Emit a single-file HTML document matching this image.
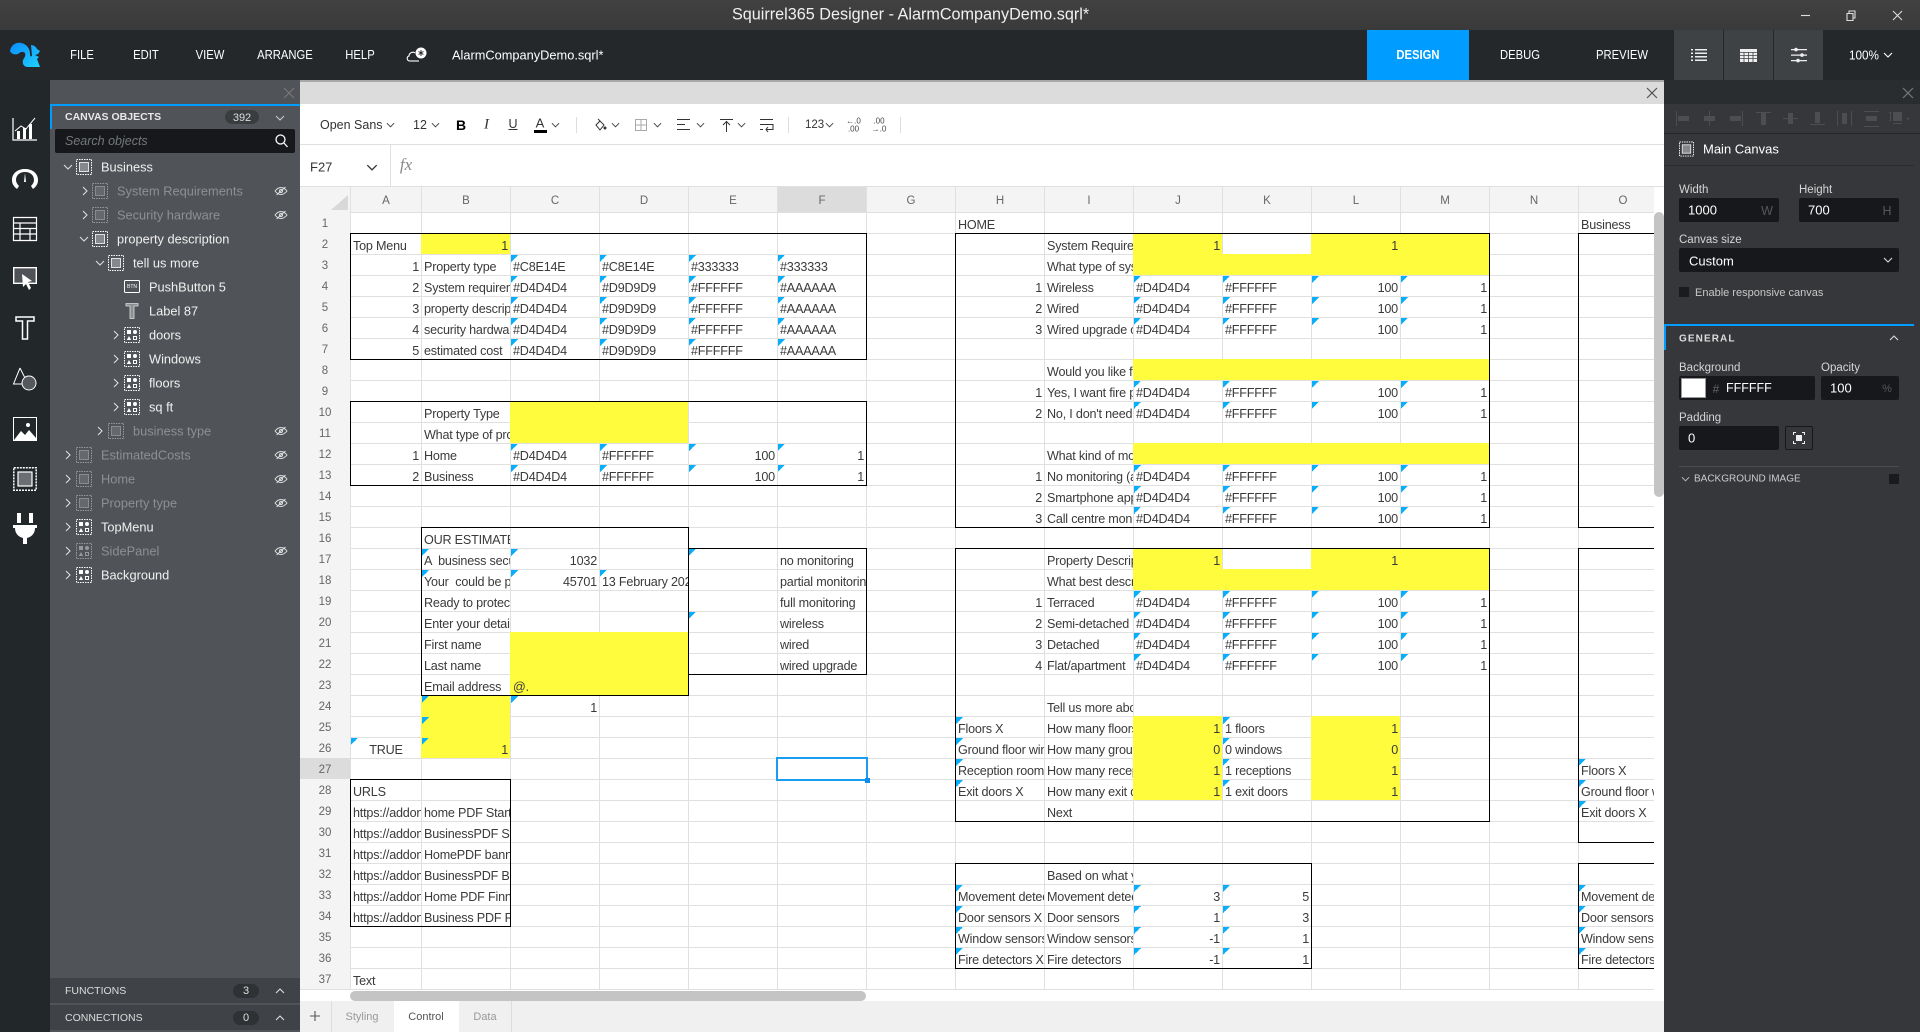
<!DOCTYPE html>
<html><head><meta charset="utf-8"><title>Squirrel365 Designer</title>
<style>
*{box-sizing:border-box}
html,body{margin:0;padding:0;width:1920px;height:1032px;overflow:hidden;background:#fff;font-family:"Liberation Sans",sans-serif}
.a{position:absolute}
.tx{position:absolute;white-space:nowrap;transform:translateY(-50%)}
.cx{position:absolute;white-space:nowrap;transform:translate(-50%,-50%)}
svg{position:absolute;overflow:visible}
#grid{position:absolute;left:300px;top:187px;width:1354px;height:803px;overflow:hidden;background-color:#fff;
background-image:linear-gradient(90deg,#e0e0e0 1px,transparent 1px),linear-gradient(#e0e0e0 1px,transparent 1px);
background-size:89px 100%,100% 21px;background-position:32px 0,0 25px}
table{border-collapse:separate;border-spacing:0;table-layout:fixed;width:1367px;position:absolute;left:0;top:0;font-size:12.6px;letter-spacing:-.2px;color:#3a3a3a}
tr{height:21px}
thead tr{height:25px}
th{font-weight:normal;font-size:11.5px;letter-spacing:0;color:#666;background:#f4f4f4;padding:2px 0 0;text-align:center;overflow:hidden}
thead th{border-left:1px solid #e0e0e0;border-bottom:0}
td{height:21px;padding:5px 2px 0 3px;line-height:16px;overflow:hidden;white-space:nowrap;vertical-align:top}
.r{text-align:right}
.m{text-align:center}
.y{background-color:#fffc3d}
.t{background-image:linear-gradient(135deg,#06aefc 50%,transparent 50%);background-size:7px 7px;background-repeat:no-repeat;background-position:1px 1px}
.b{position:absolute;border:1px solid #000;pointer-events:none}
.tree{position:absolute;font-size:12.8px;color:#f0f0f0;white-space:nowrap;transform:translateY(-50%)}
.dim{color:#8d9093}
.inp{position:absolute;background:#16181b;border-radius:2px}
.lbl{position:absolute;font-size:11.5px;color:#d5d5d5;white-space:nowrap;transform:translateY(-50%)}
.val{position:absolute;font-size:13px;color:#fff;white-space:nowrap;transform:translateY(-50%)}
.menu{position:absolute;font-size:12.5px;color:#fff;transform:translate(-50%,-50%) scaleX(.9);white-space:nowrap}
.tb{position:absolute;transform:translate(-50%,-50%);color:#333;font-size:12.5px;white-space:nowrap}
.sep{position:absolute;width:1px;top:117px;height:16px;background:#ddd}
</style></head>
<body>
<svg width="0" height="0" style="position:absolute">
<defs>
<symbol id="cv" viewBox="0 0 16 16"><rect x=".5" y=".5" width="15" height="15" fill="none" stroke="#fff" stroke-dasharray="1.5 1"/><rect x="3.5" y="3.5" width="9" height="9" fill="#85888c" stroke="#e0e0e0"/></symbol>
<symbol id="gr" viewBox="0 0 16 16"><rect x=".5" y=".5" width="15" height="15" fill="none" stroke="#fff" stroke-dasharray="1.5 1"/><rect x="3" y="3" width="4" height="4" fill="#fff"/><circle cx="11" cy="5" r="2" fill="#fff"/><path d="M5 9l2.2 4H2.800z" fill="#fff"/><rect x="9.500" y="9.500" width="3" height="3" fill="none" stroke="#fff"/></symbol>
<symbol id="eye" viewBox="0 0 14 10"><path d="M1 5C3 2.500 5 1.500 7 1.500s4 1 6 3.500c-2 2.500-4 3.500-6 3.500S3 7.500 1 5z" fill="none" stroke="#ddd" stroke-width="1"/><circle cx="7" cy="5" r="1.600" fill="none" stroke="#ddd"/><path d="M2.500 9L11.500 1" stroke="#ddd" stroke-width="1"/></symbol>
<symbol id="cd" viewBox="0 0 10 6"><path d="M1 1l4 4 4-4" fill="none" stroke="currentColor" stroke-width="1.100"/></symbol>
<symbol id="cr" viewBox="0 0 6 10"><path d="M1 1l4 4-4 4" fill="none" stroke="currentColor" stroke-width="1.100"/></symbol>
<symbol id="cu" viewBox="0 0 10 6"><path d="M1 5l4-4 4 4" fill="none" stroke="currentColor" stroke-width="1.100"/></symbol>
</defs></svg>

<!-- title bar -->
<div class="a" style="left:0;top:0;width:1920px;height:30px;background:linear-gradient(#414141,#3a3a3a)"></div>
<div class="tx" style="left:732px;top:15px;color:#f0f0f0;font-size:16.200px;">Squirrel365 Designer - AlarmCompanyDemo.sqrl*</div>
<svg style="left:1800px;top:10px" width="100" height="12" fill="none" stroke="#ddd" stroke-width="1.100"><path d="M1 5.500h9"/><path d="M47 3.500h6v7h-6zM49 3.500V1h6v7h-2"/><path d="M93 1l9 9M102 1l-9 9"/></svg>

<!-- menu bar -->
<div class="a" style="left:0;top:30px;width:1920px;height:50px;background:#24282b"></div>
<svg style="left:10px;top:42px" width="30" height="26" viewBox="0 0 30 26"><defs><linearGradient id="lg" x1="0" y1="0" x2="1" y2="1"><stop offset="0" stop-color="#0a8cff"/><stop offset="1" stop-color="#1fd0ff"/></linearGradient></defs><path d="M0 9C1 3 6 0 11 1c6 1 9 6 9 11 0 2 1 3 2 2L21 3c3 0 5 2 6 4l3 2-2 3-3 1 4 2-2 2 3 8H18c-4 0-6-3-5-7 1-2 3-4 2-7-2-2-5-1-7 1-3 1-7 0-8-3z" fill="url(#lg)"/></svg>
<div class="menu" style="left:82px;top:55px">FILE</div>
<div class="menu" style="left:146px;top:55px">EDIT</div>
<div class="menu" style="left:210px;top:55px">VIEW</div>
<div class="menu" style="left:285px;top:55px">ARRANGE</div>
<div class="menu" style="left:360px;top:55px">HELP</div>
<svg style="left:406px;top:47px" width="22" height="15" viewBox="0 0 22 15"><path d="M4 14C1 14 0 10 3 9c0-3 4-5 6-3" fill="none" stroke="#fff" stroke-width="1.100"/><path d="M4 14h9" stroke="#fff" stroke-width="1.100"/><circle cx="15" cy="6" r="5.500" fill="#fff"/><path d="M15 3v6M12.500 4.500l5 3M17.500 4.500l-5 3" stroke="#24282b" stroke-width="1"/></svg>
<div class="tx" style="left:452px;top:55px;color:#fff;font-size:12.800px">AlarmCompanyDemo.sqrl*</div>
<div class="a" style="left:1367px;top:30px;width:102px;height:50px;background:#009cff"></div>
<div class="menu" style="left:1418px;top:55px;font-weight:bold">DESIGN</div>
<div class="menu" style="left:1520px;top:55px">DEBUG</div>
<div class="menu" style="left:1622px;top:55px">PREVIEW</div>
<div class="a" style="left:1674px;top:30px;width:49px;height:50px;background:#3f4245"></div>
<div class="a" style="left:1724px;top:30px;width:49px;height:50px;background:#3f4245"></div>
<div class="a" style="left:1774px;top:30px;width:49px;height:50px;background:#3f4245"></div>
<svg style="left:1691px;top:49px" width="16" height="12" fill="#eee"><path d="M0 0h2v1.500H0zM4 0h12v1.500H4zM0 3.500h2V5H0zM4 3.500h12V5H4zM0 7h2v1.500H0zM4 7h12v1.500H4zM0 10.500h2V12H0zM4 10.500h12V12H4z"/></svg>
<svg style="left:1740px;top:49px" width="18" height="13"><rect width="17" height="13" fill="#eee"/><path d="M0 3.500h17M0 6.500h17M0 9.500h17M4 3v10M8.500 3v10M13 3v10" stroke="#3f4245" stroke-width=".8"/></svg>
<svg style="left:1791px;top:48px" width="16" height="14" fill="#eee"><path d="M0 1h16v1.200H0zM0 6.500h16v1.200H0zM0 12h16v1.200H0z"/><circle cx="5" cy="1.600" r="1.800"/><circle cx="11" cy="7.100" r="1.800"/><circle cx="7" cy="12.600" r="1.800"/></svg>
<div class="menu" style="left:1864px;top:55px;font-size:13px">100%</div>
<svg style="left:1883px;top:52px;color:#fff" width="10" height="6"><use href="#cd"/></svg>

<!-- left rail -->
<div class="a" style="left:0;top:80px;width:50px;height:952px;background:#22272a"></div>
<svg style="left:12px;top:116px" width="26" height="26" viewBox="0 0 26 26" fill="#fff"><path d="M1 2v22h24" fill="none" stroke="#fff" stroke-width="1.200"/><path d="M5 15h3v8H5zM11 12h3v11h-3zM17 8h3v15h-3z" fill="#fff"/><path d="M3 15l6-5 5 3 9-11" fill="none" stroke="#fff" stroke-width="1"/></svg>
<svg style="left:12px;top:168px" width="26" height="22" viewBox="0 0 26 22"><path d="M5 21C1 18 0 15 0 12 0 5 6 1 13 1s13 4 13 11c0 3-1 6-5 9l-2-3c2-2 3-4 3-6 0-5-4-8-9-8s-9 3-9 8c0 2 1 4 3 6z" fill="#fff"/><path d="M13 5l1 9h-2z" fill="#fff"/></svg>
<svg style="left:13px;top:217px" width="24" height="24" viewBox="0 0 24 24"><path d="M.5.500h23v23H.5zM.5 6h23M.5 11.500h23M.5 17h23M7 6v17.500M17 11.500V23.500" fill="none" stroke="#fff" stroke-width="1.200"/></svg>
<svg style="left:13px;top:267px" width="26" height="24" viewBox="0 0 26 24"><path d="M.7.700h22.600v15.600H.7z" fill="#4f5256" stroke="#fff" stroke-width="1.400"/><path d="M9 7l10 7-4 1 3 6-2 2-3-6-3 3z" fill="#fff"/></svg>
<svg style="left:15px;top:316px" width="20" height="24" viewBox="0 0 20 24"><path d="M1 1h18v4h-6.500v18h-5V5H1z" fill="none" stroke="#fff" stroke-width="1.500"/></svg>
<svg style="left:13px;top:367px" width="24" height="24" viewBox="0 0 24 24"><path d="M7 1L.5 17H12M7 1l4.500 9" fill="none" stroke="#fff" stroke-width="1"/><circle cx="16" cy="16" r="7" fill="#55585c" stroke="#fff" stroke-width="1"/></svg>
<svg style="left:13px;top:417px" width="24" height="24" viewBox="0 0 24 24"><rect x=".5" y=".5" width="23" height="23" fill="#22272a" stroke="#fff"/><path d="M1 23l7-9 4 4 4-5 7 8v2z" fill="#fff"/><circle cx="15" cy="8" r="2" fill="#fff"/></svg>
<svg style="left:13px;top:467px" width="24" height="24" viewBox="0 0 24 24"><rect x=".8" y=".8" width="22.400" height="22.400" fill="none" stroke="#fff" stroke-width="1.500" stroke-dasharray="2 1"/><rect x="5" y="5" width="14" height="14" fill="#6b6e72" stroke="#fff" stroke-width="1.200"/></svg>
<svg style="left:13px;top:513px" width="24" height="32" viewBox="0 0 24 32" fill="#fff"><path d="M4 0h4v10H4zM16 0h4v10h-4zM0 12h24v3h-2c0 6-4 9-8 10v6h-4v-6C6 24 2 21 2 15H0z"/></svg>

<!-- left panel -->
<div class="a" style="left:50px;top:80px;width:250px;height:952px;background:#505358"></div>
<svg style="left:284px;top:88px" width="10" height="10" stroke="#777" stroke-width="1.200"><path d="M0 0l10 10M10 0L0 10"/></svg>
<div class="a" style="left:50px;top:104px;width:250px;height:2px;background:#009cff"></div>
<div class="a" style="left:50px;top:104px;width:2px;height:25px;background:#009cff"></div>
<div class="tx" style="left:65px;top:117px;color:#e8e8e8;font-size:10.500px;font-weight:bold">CANVAS OBJECTS</div>
<div class="a" style="left:225px;top:110px;width:34px;height:14px;border-radius:7px;background:#3a3d40"></div>
<div class="cx" style="left:242px;top:117.500px;color:#ddd;font-size:11px">392</div>
<svg style="left:275px;top:115px;color:#ccc" width="10" height="6"><use href="#cd"/></svg>
<div class="inp" style="left:55px;top:129px;width:240px;height:24px"></div>
<div class="tx" style="left:65px;top:141px;color:#75787b;font-style:italic;font-size:12.500px">Search objects</div>
<svg style="left:275px;top:134px" width="13" height="14" fill="none" stroke="#fff" stroke-width="1.300"><circle cx="5.500" cy="5.500" r="4.500"/><path d="M9 9l3.500 4"/></svg>

<!-- tree -->
<svg style="left:63px;top:164px;color:#ddd" width="10" height="6"><use href="#cd"/></svg>
<svg style="left:76px;top:159px" width="16" height="16"><use href="#cv"/></svg>
<div class="tree" style="left:101px;top:167px">Business</div>

<svg style="left:82px;top:186px;color:#ddd" width="6" height="10"><use href="#cr"/></svg>
<svg style="left:92px;top:183px;opacity:.4" width="16" height="16"><use href="#cv"/></svg>
<div class="tree dim" style="left:117px;top:191px">System Requirements</div>
<svg style="left:274px;top:186px" width="14" height="10"><use href="#eye"/></svg>

<svg style="left:82px;top:210px;color:#ddd" width="6" height="10"><use href="#cr"/></svg>
<svg style="left:92px;top:207px;opacity:.4" width="16" height="16"><use href="#cv"/></svg>
<div class="tree dim" style="left:117px;top:215px">Security hardware</div>
<svg style="left:274px;top:210px" width="14" height="10"><use href="#eye"/></svg>

<svg style="left:79px;top:236px;color:#ddd" width="10" height="6"><use href="#cd"/></svg>
<svg style="left:92px;top:231px" width="16" height="16"><use href="#cv"/></svg>
<div class="tree" style="left:117px;top:239px">property description</div>

<svg style="left:95px;top:260px;color:#ddd" width="10" height="6"><use href="#cd"/></svg>
<svg style="left:108px;top:255px" width="16" height="16"><use href="#cv"/></svg>
<div class="tree" style="left:133px;top:263px">tell us more</div>

<svg style="left:124px;top:279px" width="16" height="16" viewBox="0 0 16 16"><rect x=".5" y="1.500" width="15" height="12" rx="1" fill="none" stroke="#fff"/></svg>
<div class="cx" style="left:132px;top:287px;font-size:5px;color:#fff">BTN</div>
<div class="tree" style="left:149px;top:287px">PushButton 5</div>

<svg style="left:125px;top:303px" width="14" height="16" viewBox="0 0 14 16"><path d="M1 .500h12v2.500H9v12.500H5V3H1z" fill="#8c8f92" stroke="#ddd" stroke-width=".8"/></svg>
<div class="tree" style="left:149px;top:311px">Label 87</div>

<svg style="left:113px;top:330px;color:#ddd" width="6" height="10"><use href="#cr"/></svg>
<svg style="left:124px;top:327px" width="16" height="16"><use href="#gr"/></svg>
<div class="tree" style="left:149px;top:335px">doors</div>
<svg style="left:113px;top:354px;color:#ddd" width="6" height="10"><use href="#cr"/></svg>
<svg style="left:124px;top:351px" width="16" height="16"><use href="#gr"/></svg>
<div class="tree" style="left:149px;top:359px">Windows</div>
<svg style="left:113px;top:378px;color:#ddd" width="6" height="10"><use href="#cr"/></svg>
<svg style="left:124px;top:375px" width="16" height="16"><use href="#gr"/></svg>
<div class="tree" style="left:149px;top:383px">floors</div>
<svg style="left:113px;top:402px;color:#ddd" width="6" height="10"><use href="#cr"/></svg>
<svg style="left:124px;top:399px" width="16" height="16"><use href="#gr"/></svg>
<div class="tree" style="left:149px;top:407px">sq ft</div>

<svg style="left:97px;top:426px;color:#ddd" width="6" height="10"><use href="#cr"/></svg>
<svg style="left:108px;top:423px;opacity:.4" width="16" height="16"><use href="#cv"/></svg>
<div class="tree dim" style="left:133px;top:431px">business type</div>
<svg style="left:274px;top:426px" width="14" height="10"><use href="#eye"/></svg>

<svg style="left:65px;top:450px;color:#ddd" width="6" height="10"><use href="#cr"/></svg>
<svg style="left:76px;top:447px;opacity:.4" width="16" height="16"><use href="#cv"/></svg>
<div class="tree dim" style="left:101px;top:455px">EstimatedCosts</div>
<svg style="left:274px;top:450px" width="14" height="10"><use href="#eye"/></svg>

<svg style="left:65px;top:474px;color:#ddd" width="6" height="10"><use href="#cr"/></svg>
<svg style="left:76px;top:471px;opacity:.4" width="16" height="16"><use href="#cv"/></svg>
<div class="tree dim" style="left:101px;top:479px">Home</div>
<svg style="left:274px;top:474px" width="14" height="10"><use href="#eye"/></svg>

<svg style="left:65px;top:498px;color:#ddd" width="6" height="10"><use href="#cr"/></svg>
<svg style="left:76px;top:495px;opacity:.4" width="16" height="16"><use href="#cv"/></svg>
<div class="tree dim" style="left:101px;top:503px">Property type</div>
<svg style="left:274px;top:498px" width="14" height="10"><use href="#eye"/></svg>

<svg style="left:65px;top:522px;color:#ddd" width="6" height="10"><use href="#cr"/></svg>
<svg style="left:76px;top:519px" width="16" height="16"><use href="#gr"/></svg>
<div class="tree" style="left:101px;top:527px">TopMenu</div>

<svg style="left:65px;top:546px;color:#ddd" width="6" height="10"><use href="#cr"/></svg>
<svg style="left:76px;top:543px;opacity:.4" width="16" height="16"><use href="#gr"/></svg>
<div class="tree dim" style="left:101px;top:551px">SidePanel</div>
<svg style="left:274px;top:546px" width="14" height="10"><use href="#eye"/></svg>

<svg style="left:65px;top:570px;color:#ddd" width="6" height="10"><use href="#cr"/></svg>
<svg style="left:76px;top:567px" width="16" height="16"><use href="#gr"/></svg>
<div class="tree" style="left:101px;top:575px">Background</div>

<!-- functions / connections -->
<div class="a" style="left:50px;top:978px;width:250px;height:25px;background:#3f4246"></div>
<div class="a" style="left:50px;top:1005px;width:250px;height:25px;background:#3f4246"></div>
<div class="tx" style="left:65px;top:991px;color:#ddd;font-size:10.500px">FUNCTIONS</div>
<div class="tx" style="left:65px;top:1018px;color:#ddd;font-size:10.500px">CONNECTIONS</div>
<div class="a" style="left:233px;top:984px;width:26px;height:14px;border-radius:7px;background:#2f3235"></div>
<div class="a" style="left:233px;top:1011px;width:26px;height:14px;border-radius:7px;background:#2f3235"></div>
<div class="cx" style="left:246px;top:991px;color:#ddd;font-size:11px">3</div>
<div class="cx" style="left:246px;top:1018px;color:#ddd;font-size:11px">0</div>
<svg style="left:275px;top:988px;color:#ddd" width="10" height="6"><use href="#cu"/></svg>
<svg style="left:275px;top:1015px;color:#ddd" width="10" height="6"><use href="#cu"/></svg>

<!-- main: strip + toolbar -->
<div class="a" style="left:300px;top:80px;width:1364px;height:2px;background:#a8a8a8"></div>
<div class="a" style="left:300px;top:82px;width:1364px;height:22px;background:#dcdcdc"></div>
<svg style="left:1647px;top:88px" width="10" height="10" stroke="#555" stroke-width="1.200"><path d="M0 0l10 10M10 0L0 10"/></svg>
<div class="a" style="left:300px;top:104px;width:1364px;height:41px;background:#fff;border-bottom:1px solid #e0e0e0"></div>
<div class="a" style="left:300px;top:145px;width:1364px;height:42px;background:#fff;border-bottom:1px solid #e0e0e0"></div>

<div class="tx" style="left:320px;top:125px;font-size:12.500px;color:#333">Open Sans</div>
<svg style="left:386px;top:122px;color:#444" width="9" height="6"><use href="#cd"/></svg>
<div class="tx" style="left:413px;top:125px;font-size:12.500px;color:#333">12</div>
<svg style="left:431px;top:122px;color:#444" width="9" height="6"><use href="#cd"/></svg>
<div class="tb" style="left:461px;top:125px;font-weight:bold;font-size:14px;color:#000">B</div>
<div class="tb" style="left:486.500px;top:125px;font-style:italic;font-family:'Liberation Serif',serif;font-size:15px">I</div>
<div class="tb" style="left:513px;top:124px;text-decoration:underline;font-size:12.500px">U</div>
<div class="tb" style="left:540px;top:123px;font-size:13px">A</div>
<div class="a" style="left:534px;top:130px;width:13px;height:3px;background:#000"></div>
<svg style="left:551px;top:122px;color:#444" width="9" height="6"><use href="#cd"/></svg>
<div class="sep" style="left:576px"></div>
<svg style="left:594px;top:118px" width="12" height="14" fill="none" stroke="#333"><path d="M2 7l4-4 4 4-4 5z"/><path d="M4 1l2 2" /><circle cx="11" cy="10" r="1" fill="#333"/></svg>
<svg style="left:611px;top:122px;color:#444" width="9" height="6"><use href="#cd"/></svg>
<svg style="left:635px;top:119px" width="12" height="12" fill="none" stroke="#aaa"><path d="M.5.500h11v11H.5zM6 .500v11M.5 6h11"/></svg>
<svg style="left:653px;top:122px;color:#444" width="9" height="6"><use href="#cd"/></svg>
<svg style="left:677px;top:119px" width="14" height="12" stroke="#333" stroke-width="1"><path d="M0 .500h13M0 5.500h8M0 10.500h13"/></svg>
<svg style="left:696px;top:122px;color:#444" width="9" height="6"><use href="#cd"/></svg>
<svg style="left:720px;top:119px" width="13" height="13" fill="none" stroke="#333"><path d="M0 .500h13M6.500 13V3M3 6l3.500-3.500L10 6"/></svg>
<svg style="left:737px;top:122px;color:#444" width="9" height="6"><use href="#cd"/></svg>
<svg style="left:760px;top:119px" width="14" height="13" fill="none" stroke="#333"><path d="M0 .500h13M0 5.500h13v5H6M8 8l-2 2.500L8 13M0 10.500h3"/></svg>
<div class="sep" style="left:788px"></div>
<div class="tx" style="left:805px;top:125px;font-size:11.500px;color:#333">123</div>
<svg style="left:825px;top:122px;color:#444" width="9" height="6"><use href="#cd"/></svg>
<div class="cx" style="left:853.500px;top:121px;font-size:8px;color:#444">←.0</div>
<div class="cx" style="left:853.500px;top:129px;font-size:8px;color:#444">.00</div>
<div class="cx" style="left:879px;top:121px;font-size:8px;color:#444">.00</div>
<div class="cx" style="left:879px;top:129px;font-size:8px;color:#444">→.0</div>
<div class="sep" style="left:900px"></div>

<div class="tx" style="left:310px;top:167px;font-size:13px;color:#333">F27</div>
<svg style="left:366px;top:164px;color:#333" width="12" height="7"><use href="#cd"/></svg>
<div class="a" style="left:390px;top:145px;width:1px;height:41px;background:#e0e0e0"></div>
<div class="cx" style="left:406px;top:165px;font-family:'Liberation Serif',serif;font-style:italic;font-size:17px;color:#888">fx</div>

<!-- grid -->
<div id="grid">
<table>
<colgroup><col style="width:50px"><col style="width:71px"><col span="14" style="width:89px"></colgroup>
<thead><tr><th style="border-left:0;position:relative"><svg style="left:31px;top:8px" width="17" height="15"><path d="M0 15L17 0v15z" fill="#d8d8d8"/></svg></th><th>A</th><th>B</th><th>C</th><th>D</th><th>E</th><th style="background:#dcdcdc">F</th><th>G</th><th>H</th><th>I</th><th>J</th><th>K</th><th>L</th><th>M</th><th>N</th><th>O</th></tr></thead>
<tbody>
<tr><th>1</th><td colspan="7"></td><td>HOME</td><td colspan="5"></td><td></td><td>Business</td></tr>
<tr><th>2</th><td>Top Menu</td><td class="y r">1</td><td colspan="5"></td><td></td><td>System Requirements</td><td class="y r">1</td><td></td><td class="y r">1</td><td class="y"></td></tr>
<tr><th>3</th><td class="r">1</td><td>Property type</td><td class="t">#C8E14E</td><td class="t">#C8E14E</td><td class="t">#333333</td><td class="t">#333333</td><td></td><td></td><td>What type of system</td><td class="y"></td><td class="y"></td><td class="y"></td><td class="y"></td></tr>
<tr><th>4</th><td class="r">2</td><td>System requirements</td><td class="t">#D4D4D4</td><td class="t">#D9D9D9</td><td class="t">#FFFFFF</td><td class="t">#AAAAAA</td><td></td><td class="r">1</td><td>Wireless</td><td class="t">#D4D4D4</td><td class="t">#FFFFFF</td><td class="t r">100</td><td class="t r">1</td></tr>
<tr><th>5</th><td class="r">3</td><td>property description</td><td class="t">#D4D4D4</td><td class="t">#D9D9D9</td><td class="t">#FFFFFF</td><td class="t">#AAAAAA</td><td></td><td class="r">2</td><td>Wired</td><td class="t">#D4D4D4</td><td class="t">#FFFFFF</td><td class="t r">100</td><td class="t r">1</td></tr>
<tr><th>6</th><td class="r">4</td><td>security hardware</td><td class="t">#D4D4D4</td><td class="t">#D9D9D9</td><td class="t">#FFFFFF</td><td class="t">#AAAAAA</td><td></td><td class="r">3</td><td>Wired upgrade option</td><td class="t">#D4D4D4</td><td class="t">#FFFFFF</td><td class="t r">100</td><td class="t r">1</td></tr>
<tr><th>7</th><td class="r">5</td><td>estimated cost</td><td class="t">#D4D4D4</td><td class="t">#D9D9D9</td><td class="t">#FFFFFF</td><td class="t">#AAAAAA</td></tr>
<tr><th>8</th><td colspan="8"></td><td>Would you like fire protection</td><td class="y"></td><td class="y"></td><td class="y"></td><td class="y"></td></tr>
<tr><th>9</th><td colspan="7"></td><td class="r">1</td><td>Yes, I want fire protection</td><td class="t">#D4D4D4</td><td class="t">#FFFFFF</td><td class="t r">100</td><td class="t r">1</td></tr>
<tr><th>10</th><td></td><td>Property Type</td><td class="y"></td><td class="y"></td><td colspan="3"></td><td class="r">2</td><td>No, I don't need</td><td class="t">#D4D4D4</td><td class="t">#FFFFFF</td><td class="t r">100</td><td class="t r">1</td></tr>
<tr><th>11</th><td></td><td>What type of property</td><td class="y"></td><td class="y"></td></tr>
<tr><th>12</th><td class="r">1</td><td>Home</td><td class="t">#D4D4D4</td><td class="t">#FFFFFF</td><td class="t r">100</td><td class="t r">1</td><td></td><td></td><td>What kind of monitoring</td><td class="y"></td><td class="y"></td><td class="y"></td><td class="y"></td></tr>
<tr><th>13</th><td class="r">2</td><td>Business</td><td class="t">#D4D4D4</td><td class="t">#FFFFFF</td><td class="t r">100</td><td class="t r">1</td><td></td><td class="r">1</td><td>No monitoring (a</td><td class="t">#D4D4D4</td><td class="t">#FFFFFF</td><td class="t r">100</td><td class="t r">1</td></tr>
<tr><th>14</th><td colspan="7"></td><td class="r">2</td><td>Smartphone app</td><td class="t">#D4D4D4</td><td class="t">#FFFFFF</td><td class="t r">100</td><td class="t r">1</td></tr>
<tr><th>15</th><td colspan="7"></td><td class="r">3</td><td>Call centre monitoring</td><td class="t">#D4D4D4</td><td class="t">#FFFFFF</td><td class="t r">100</td><td class="t r">1</td></tr>
<tr><th>16</th><td></td><td>OUR ESTIMATED</td></tr>
<tr><th>17</th><td></td><td class="t">A &nbsp;business security</td><td class="t r">1032</td><td></td><td class="t"></td><td>no monitoring</td><td></td><td></td><td>Property Description</td><td class="y r">1</td><td></td><td class="y r">1</td><td class="y"></td></tr>
<tr><th>18</th><td></td><td class="t">Your &nbsp;could be protected</td><td class="t r">45701</td><td class="t">13 February 2021</td><td></td><td>partial monitoring</td><td></td><td></td><td>What best describes</td><td class="y"></td><td class="y"></td><td class="y"></td><td class="y"></td></tr>
<tr><th>19</th><td></td><td>Ready to protect</td><td colspan="3"></td><td>full monitoring</td><td></td><td class="r">1</td><td>Terraced</td><td class="t">#D4D4D4</td><td class="t">#FFFFFF</td><td class="t r">100</td><td class="t r">1</td></tr>
<tr><th>20</th><td></td><td>Enter your details</td><td colspan="2"></td><td class="t"></td><td>wireless</td><td></td><td class="r">2</td><td>Semi-detached</td><td class="t">#D4D4D4</td><td class="t">#FFFFFF</td><td class="t r">100</td><td class="t r">1</td></tr>
<tr><th>21</th><td></td><td>First name</td><td class="y"></td><td class="y"></td><td></td><td>wired</td><td></td><td class="r">3</td><td>Detached</td><td class="t">#D4D4D4</td><td class="t">#FFFFFF</td><td class="t r">100</td><td class="t r">1</td></tr>
<tr><th>22</th><td></td><td>Last name</td><td class="y"></td><td class="y"></td><td></td><td>wired upgrade</td><td></td><td class="r">4</td><td>Flat/apartment</td><td class="t">#D4D4D4</td><td class="t">#FFFFFF</td><td class="t r">100</td><td class="t r">1</td></tr>
<tr><th>23</th><td></td><td>Email address</td><td class="y">@.</td><td class="y"></td></tr>
<tr><th>24</th><td></td><td class="y t"></td><td class="t r">1</td><td colspan="5"></td><td>Tell us more about</td></tr>
<tr><th>25</th><td></td><td class="y t"></td><td colspan="5"></td><td class="t">Floors X</td><td>How many floors</td><td class="y r">1</td><td class="t">1 floors</td><td class="y r">1</td></tr>
<tr><th>26</th><td class="t m">TRUE</td><td class="y t r">1</td><td colspan="5"></td><td class="t">Ground floor windows X</td><td>How many ground floor</td><td class="y r">0</td><td class="t">0 windows</td><td class="y r">0</td></tr>
<tr><th style="background:#dcdcdc">27</th><td colspan="7"></td><td class="t">Reception rooms X</td><td>How many reception rooms</td><td class="y r">1</td><td class="t">1 receptions</td><td class="y r">1</td><td colspan="2"></td><td class="t">Floors X</td></tr>
<tr><th>28</th><td>URLS</td><td colspan="6"></td><td class="t">Exit doors X</td><td>How many exit doors</td><td class="y r">1</td><td class="t">1 exit doors</td><td class="y r">1</td><td colspan="2"></td><td class="t">Ground floor windows</td></tr>
<tr><th>29</th><td>https://addons</td><td>home PDF Starter</td><td colspan="6"></td><td>Next</td><td colspan="5"></td><td class="t">Exit doors X</td></tr>
<tr><th>30</th><td>https://addons</td><td>BusinessPDF Starter</td></tr>
<tr><th>31</th><td>https://addons</td><td>HomePDF banner</td></tr>
<tr><th>32</th><td>https://addons</td><td>BusinessPDF Basic</td><td colspan="6"></td><td>Based on what you</td></tr>
<tr><th>33</th><td>https://addons</td><td>Home PDF Finn</td><td colspan="5"></td><td class="t">Movement detectors X</td><td>Movement detectors</td><td class="t r">3</td><td class="t r">5</td><td colspan="3"></td><td class="t">Movement detectors X</td></tr>
<tr><th>34</th><td>https://addons</td><td>Business PDF Finn</td><td colspan="5"></td><td class="t">Door sensors X</td><td>Door sensors</td><td class="t r">1</td><td class="t r">3</td><td colspan="3"></td><td class="t">Door sensors X</td></tr>
<tr><th>35</th><td colspan="7"></td><td class="t">Window sensors X</td><td>Window sensors</td><td class="t r">-1</td><td class="t r">1</td><td colspan="3"></td><td class="t">Window sensors X</td></tr>
<tr><th>36</th><td colspan="7"></td><td class="t">Fire detectors X</td><td>Fire detectors</td><td class="t r">-1</td><td class="t r">1</td><td colspan="3"></td><td class="t">Fire detectors X</td></tr>
<tr><th>37</th><td>Text</td></tr>
</tbody></table>
<div class="a" style="left:50px;top:25px;width:1px;height:778px;background:#e0e0e0"></div>
<div class="b" style="left:50px;top:46px;width:517px;height:127px"></div>
<div class="b" style="left:50px;top:214px;width:517px;height:85px"></div>
<div class="b" style="left:121px;top:340px;width:268px;height:169px"></div>
<div class="b" style="left:388px;top:361px;width:179px;height:127px"></div>
<div class="b" style="left:50px;top:592px;width:161px;height:148px"></div>
<div class="b" style="left:655px;top:46px;width:535px;height:295px"></div>
<div class="b" style="left:655px;top:361px;width:535px;height:274px"></div>
<div class="b" style="left:655px;top:676px;width:357px;height:106px"></div>
<div class="b" style="left:1278px;top:46px;width:200px;height:295px"></div>
<div class="b" style="left:1278px;top:361px;width:200px;height:295px"></div>
<div class="b" style="left:1278px;top:676px;width:200px;height:106px"></div>
<div class="a" style="left:476px;top:570px;width:92px;height:24px;border:2px solid #1a9cf0"></div>
<div class="a" style="left:565px;top:591px;width:5px;height:5px;background:#0a8ff0"></div>
</div>

<!-- scrollbars -->
<div class="a" style="left:1654px;top:187px;width:10px;height:814px;background:#fff"></div>
<div class="a" style="left:1654px;top:212px;width:10px;height:285px;background:#c4c4c4;border-radius:5px"></div>
<div class="a" style="left:300px;top:990px;width:1354px;height:11px;background:#fff"></div>
<div class="a" style="left:350px;top:991px;width:516px;height:10px;background:#c4c4c4;border-radius:5px"></div>

<!-- bottom tabs -->
<div class="a" style="left:300px;top:1001px;width:1364px;height:31px;background:#f0f0f0"></div>
<div class="a" style="left:331px;top:1001px;width:1px;height:31px;background:#ddd"></div>
<div class="a" style="left:394px;top:1001px;width:65px;height:31px;background:#fff"></div>
<div class="a" style="left:511px;top:1001px;width:1px;height:31px;background:#ddd"></div>
<svg style="left:310px;top:1011px" width="10" height="10" stroke="#555" stroke-width="1.100"><path d="M5 0v10M0 5h10"/></svg>
<div class="cx" style="left:362px;top:1017px;font-size:11px;color:#999">Styling</div>
<div class="cx" style="left:426px;top:1017px;font-size:11px;color:#555">Control</div>
<div class="cx" style="left:485px;top:1017px;font-size:11px;color:#999">Data</div>

<!-- right panel -->
<div class="a" style="left:1664px;top:80px;width:256px;height:952px;background:#36373a"></div>
<div class="a" style="left:1664px;top:80px;width:256px;height:24px;background:#2a2d30"></div>
<svg style="left:1903px;top:88px" width="10" height="10" stroke="#777" stroke-width="1.200"><path d="M0 0l10 10M10 0L0 10"/></svg>
<svg style="left:1664px;top:104px" width="256" height="30" viewBox="0 0 256 30" fill="#4c4e52">
<path d="M12 7h1v15h-1zM14 12h11v5H14z"/>
<path d="M45 7h1v15h-1zM40 12h11v5H40z"/>
<path d="M78 7h1v15h-1zM66 12h11v5H66z"/>
<path d="M92 8h15v1H92zM97 9h5v12h-5z"/>
<path d="M119 14h15v1h-15zM124 9h5v11h-5z"/>
<path d="M146 20h15v1h-15zM151 8h5v11h-5z"/>
<path d="M173 7h1v15h-1zM187 7h1v15h-1zM178 9h5v11h-5z"/>
<path d="M200 7h15v1h-15zM200 22h15v1h-15zM202 12h11v5h-11z"/>
<path d="M229 8h9v9h-9zM225 8h2v1h-2zM225 16h2v1h-2zM226 8h1v9h-1zM229 19h9v1h-9zM242 14h4l-2 2z"/></svg>
<div class="a" style="left:1664px;top:133px;width:256px;height:1px;background:#242628"></div>
<svg style="left:1679px;top:141px" width="15" height="16"><use href="#cv"/></svg>
<div class="val" style="left:1703px;top:149px;font-size:13px;color:#fff">Main Canvas</div>
<div class="a" style="left:1664px;top:165px;width:250px;height:1px;background:#2a2c2e"></div>

<div class="lbl" style="left:1679px;top:190px">Width</div>
<div class="lbl" style="left:1799px;top:190px">Height</div>
<div class="inp" style="left:1679px;top:198px;width:100px;height:24px"></div>
<div class="inp" style="left:1799px;top:198px;width:100px;height:24px"></div>
<div class="val" style="left:1688px;top:210px">1000</div>
<div class="val" style="left:1808px;top:210px">700</div>
<div class="cx" style="left:1767px;top:210.500px;font-size:12.500px;color:#55585c">W</div>
<div class="cx" style="left:1887px;top:210.500px;font-size:12.500px;color:#55585c">H</div>
<div class="lbl" style="left:1679px;top:240px">Canvas size</div>
<div class="inp" style="left:1679px;top:248px;width:220px;height:24px"></div>
<div class="val" style="left:1689px;top:261px">Custom</div>
<svg style="left:1883px;top:257px;color:#ddd" width="10" height="6"><use href="#cd"/></svg>
<div class="a" style="left:1679px;top:287px;width:10px;height:10px;background:#1a1b1e"></div>
<div class="lbl" style="left:1695px;top:292.500px;font-size:11px;color:#c8c8c8">Enable responsive canvas</div>

<div class="a" style="left:1664px;top:324px;width:250px;height:2px;background:#009cff"></div>
<div class="a" style="left:1664px;top:324px;width:2px;height:26px;background:#009cff"></div>
<div class="tx" style="left:1679px;top:339px;color:#ddd;font-weight:bold;font-size:10px;letter-spacing:1.100px">GENERAL</div>
<svg style="left:1889px;top:335px;color:#ddd" width="10" height="6"><use href="#cu"/></svg>
<div class="lbl" style="left:1679px;top:368px">Background</div>
<div class="lbl" style="left:1821px;top:368px">Opacity</div>
<div class="inp" style="left:1679px;top:376px;width:136px;height:24px"></div>
<div class="a" style="left:1681px;top:378px;width:25px;height:20px;background:#fff;border:1px solid #999"></div>
<div class="cx" style="left:1716px;top:389px;font-size:12px;color:#666">#</div>
<div class="val" style="left:1726px;top:388px;font-size:12.500px">FFFFFF</div>
<div class="inp" style="left:1821px;top:376px;width:78px;height:24px"></div>
<div class="val" style="left:1830px;top:388px">100</div>
<div class="cx" style="left:1887px;top:389px;font-size:11px;color:#55585c">%</div>
<div class="lbl" style="left:1679px;top:418px">Padding</div>
<div class="inp" style="left:1679px;top:426px;width:100px;height:24px"></div>
<div class="val" style="left:1688px;top:438px">0</div>
<div class="a" style="left:1785px;top:426px;width:28px;height:24px;border:1px solid #16181b;border-radius:2px"></div>
<svg style="left:1793px;top:432px" width="12" height="12" fill="none" stroke="#eee"><path d="M.5 3V.5H3M9 .5h2.500V3M11.500 9v2.500H9M3 11.500H.5V9" /><rect x="3.500" y="3.500" width="5" height="5" fill="#eee"/></svg>
<div class="a" style="left:1679px;top:466px;width:220px;height:1px;background:#4a4c50"></div>
<svg style="left:1681px;top:476px;color:#bbb" width="9" height="6"><use href="#cd"/></svg>
<div class="tx" style="left:1694px;top:479px;color:#ccc;font-size:10px">BACKGROUND IMAGE</div>
<div class="a" style="left:1889px;top:474px;width:10px;height:10px;background:#1a1b1e"></div>
</body></html>
